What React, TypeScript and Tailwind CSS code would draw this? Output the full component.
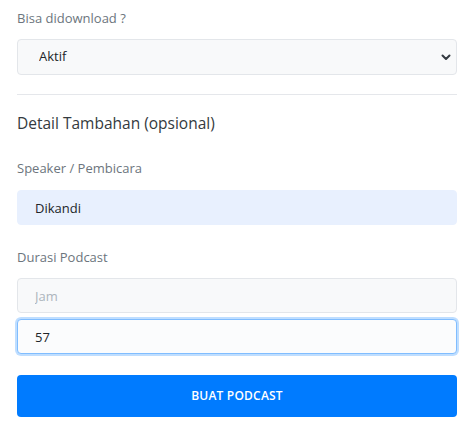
import React from 'react';

export default function App() {
  return (
    <main className="bg-white min-h-screen w-[469px] h-[433px] overflow-hidden font-['Open_Sans',sans-serif] text-[#212529]">
      <div className="w-[440px] ml-[17px] pt-[8px]">
        {/* Download option */}
        <label className="block text-[13px] leading-[20px] text-[#6c757d]">Bisa didownload ?</label>
        <div className="relative mt-[11px]">
          <select
            defaultValue="aktif"
            className="appearance-none w-full h-[36px] pl-[21px] pr-8 text-[13px] bg-[#f8f9fa] border border-[#e3e6ea] rounded-[4px] outline-none text-[#212529]"
          >
            <option value="aktif">Aktif</option>
            <option value="nonaktif">Tidak Aktif</option>
          </select>
          <svg className="absolute right-[6px] top-[13px] w-[10px] h-[10px] pointer-events-none" viewBox="0 0 10 10" fill="none" stroke="#343a40" strokeWidth={2} strokeLinecap="round" strokeLinejoin="round">
            <path d="M1.5 3.5 5 7l3.5-3.5" />
          </svg>
        </div>

        <hr className="mt-[19px] border-t border-[#e5e7eb]" />

        <h3 className="mt-[17px] text-[15.5px] leading-[22px] text-[#343a40]">Detail Tambahan (opsional)</h3>

        {/* Speaker */}
        <label className="block mt-[24px] text-[13px] leading-[20px] text-[#6c757d]">Speaker / Pembicara</label>
        <input
          defaultValue="Dikandi"
          className="block mt-[12px] w-full h-[35px] px-[17px] text-[13px] bg-[#e8f0fe] border border-[#e8f0fe] rounded-[4px] outline-none text-[#212529]"
        />

        {/* Duration */}
        <label className="block mt-[22px] text-[13px] leading-[20px] text-[#6c757d]">Durasi Podcast</label>
        <input
          placeholder="Jam"
          className="block mt-[11px] w-full h-[35px] px-[17px] text-[13px] bg-[#f8f9fa] border border-[#e3e6ea] rounded-[4px] outline-none placeholder:text-[#adb5bd]"
        />
        <input
          defaultValue="57"
          className="block mt-[6px] w-full h-[35px] px-[17px] text-[13px] bg-[#fbfcfd] border border-[#80bdff] rounded-[4px] outline-none shadow-[0_0_0_2px_rgba(0,123,255,0.25)] text-[#212529]"
        />

        <button className="mt-[21px] w-full h-[42px] bg-[#007bff] rounded-[4px] text-white text-[12px] font-semibold tracking-[0.2px]">
          BUAT PODCAST
        </button>
      </div>
    </main>
  );
}
